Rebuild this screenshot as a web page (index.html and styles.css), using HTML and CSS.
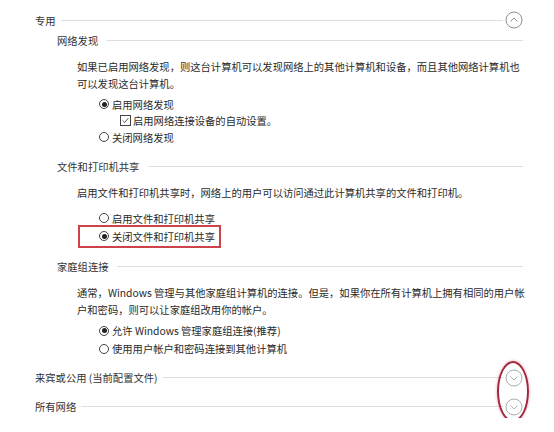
FILE: index.html
```html
<!DOCTYPE html>
<html lang="zh-CN">
<head>
    <meta charset="UTF-8">
    <title>高级共享设置</title>
    <link rel="stylesheet" href="styles.css">
</head>
<body>
    <div class="panel">
        <section class="group">
            <div class="group-head">
                <span class="group-title">专用</span>
                <span class="rule"></span>
                <svg class="toggle" viewBox="0 0 18 18"><circle cx="9" cy="9" r="8"/><polyline points="5.5,10.5 9,7 12.5,10.5"/></svg>
            </div>

            <div class="sub first">
                <div class="sub-head"><span>网络发现</span><span class="rule"></span></div>
                <p class="desc">如果已启用网络发现，则这台计算机可以发现网络上的其他计算机和设备，而且其他网络计算机也<br>可以发现这台计算机。</p>
                <ul class="options">
                    <li class="opt"><span class="radio on"></span>启用网络发现</li>
                    <li class="opt nested"><span class="check"><svg viewBox="0 0 11 11"><polyline points="2,5.5 4.5,8 9,2.5"/></svg></span>启用网络连接设备的自动设置。</li>
                    <li class="opt"><span class="radio"></span>关闭网络发现</li>
                </ul>
            </div>

            <div class="sub">
                <div class="sub-head"><span>文件和打印机共享</span><span class="rule"></span></div>
                <p class="desc">启用文件和打印机共享时，网络上的用户可以访问通过此计算机共享的文件和打印机。</p>
                <ul class="options wide">
                    <li class="opt"><span class="radio"></span>启用文件和打印机共享</li>
                    <li class="opt marked"><span class="radio on"></span>关闭文件和打印机共享</li>
                </ul>
            </div>

            <div class="sub">
                <div class="sub-head"><span>家庭组连接</span><span class="rule"></span></div>
                <p class="desc">通常，Windows 管理与其他家庭组计算机的连接。但是，如果你在所有计算机上拥有相同的用户帐<br>户和密码，则可以让家庭组改用你的帐户。</p>
                <ul class="options tall">
                    <li class="opt"><span class="radio on"></span>允许 Windows 管理家庭组连接(推荐)</li>
                    <li class="opt"><span class="radio"></span>使用用户帐户和密码连接到其他计算机</li>
                </ul>
            </div>
        </section>

        <div class="others">
            <section class="group">
                <div class="group-head">
                    <span class="group-title">来宾或公用 (当前配置文件)</span>
                    <span class="rule"></span>
                    <svg class="toggle closed" viewBox="0 0 18 18"><circle cx="9" cy="9" r="8"/><polyline points="5.5,7.5 9,11 12.5,7.5"/></svg>
                </div>
            </section>
            <section class="group">
                <div class="group-head">
                    <span class="group-title">所有网络</span>
                    <span class="rule"></span>
                    <svg class="toggle closed" viewBox="0 0 18 18"><circle cx="9" cy="9" r="8"/><polyline points="5.5,7.5 9,11 12.5,7.5"/></svg>
                </div>
            </section>
        </div>
    </div>
</body>
</html>
```

FILE: styles.css
```css
body {
    margin: 0;
    background: #fff;
    font-family: "Noto Sans CJK SC", "Noto Sans", sans-serif;
    font-size: 10.3px;
    color: #333;
}
.panel {
    margin: 9px 31px 0 35px;
}
.group-head {
    display: flex;
    align-items: center;
    height: 22px;
}
.rule {
    flex: 1;
    height: 1px;
    background: #dedede;
}
.group-head .rule {
    margin: 0 2px 0 5px;
}
.toggle {
    width: 18px;
    height: 18px;
    fill: none;
    stroke: #8c8c8c;
    stroke-width: 1;
}
.toggle.closed {
    stroke: #a3b2ad;
}

.sub {
    padding-left: 22px;
    margin-top: 12.5px;
}
.sub.first {
    margin-top: 1px;
}
.sub-head {
    display: flex;
    align-items: center;
    line-height: 17px;
}
.sub-head .rule {
    margin-left: 9px;
}
.desc {
    margin: 9px 0 0;
    padding-left: 20px;
    line-height: 17px;
    white-space: nowrap;
    color: #2a2a2a;
}

.options {
    list-style: none;
    margin: 4px 0 0;
    padding-left: 42px;
}
.options.wide {
    margin-top: 8px;
}
.opt {
    display: flex;
    align-items: center;
    gap: 3px;
    height: 16.5px;
    color: #2a2a2a;
    position: relative;
}
.options.wide .opt,
.options.tall .opt {
    height: 18px;
}
.opt.nested {
    padding-left: 21px;
    gap: 2px;
}
.radio {
    width: 10px;
    height: 10px;
    border: 1px solid #444;
    border-radius: 50%;
    box-sizing: border-box;
    display: flex;
    align-items: center;
    justify-content: center;
}
.radio.on::after {
    content: "";
    width: 5px;
    height: 5px;
    border-radius: 50%;
    background: #222;
}
.check {
    width: 11px;
    height: 11px;
    border: 1px solid #444;
    box-sizing: border-box;
    display: flex;
}
.check svg {
    width: 100%;
    height: 100%;
    fill: none;
    stroke: #333;
    stroke-width: 1;
}

/* annotations drawn over the dialog */
.opt.marked::after {
    content: "";
    position: absolute;
    left: -21px;
    top: -2.5px;
    width: 143px;
    height: 23px;
    box-sizing: border-box;
    border: 2px solid #cc4349;
}
.others {
    position: relative;
    margin-top: 9px;
}
.others .group + .group {
    margin-top: 7px;
}
.others::after {
    content: "";
    position: absolute;
    left: 462px;
    top: -5.5px;
    width: 32px;
    height: 61px;
    box-sizing: border-box;
    border: 2px solid #a02a3c;
    border-radius: 50%;
    box-shadow: 0 0 3px rgba(225, 90, 110, 0.6);
}
```
